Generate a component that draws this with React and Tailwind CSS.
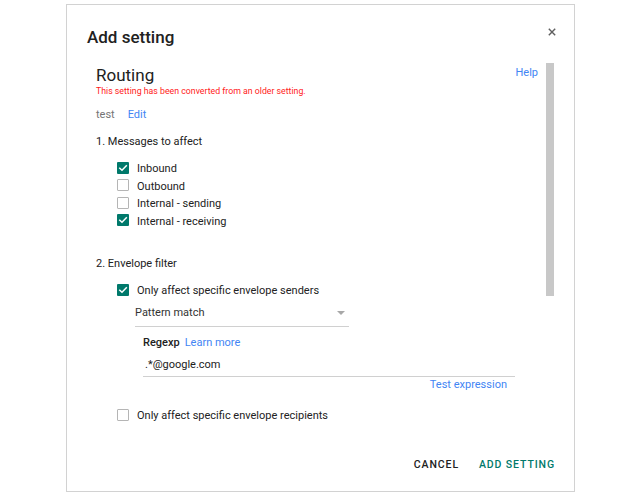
import React from "react";

function CheckBox({ checked }) {
  if (checked) {
    return (
      <span className="flex h-[12px] w-[12px] shrink-0 items-center justify-center rounded-[1px] bg-[#00796b]">
        <svg width="10" height="10" viewBox="0 0 10 10" fill="none">
          <path d="M1.8 5.2 L4 7.3 L8.3 2.8" stroke="#fff" strokeWidth="1.5" strokeLinecap="square" />
        </svg>
      </span>
    );
  }
  return <span className="h-[12px] w-[12px] shrink-0 rounded-[1px] border-[1.5px] border-[#b5b5b5] bg-white" />;
}

function CheckRow({ checked, label, className = "" }) {
  return (
    <div className={"flex items-center leading-[17.5px] " + className}>
      <span className="mb-[2px] ml-[21px] mr-[8px] flex">
        <CheckBox checked={checked} />
      </span>
      <span>{label}</span>
    </div>
  );
}

export default function App() {
  const messages = [
    { label: "Inbound", checked: true },
    { label: "Outbound", checked: false },
    { label: "Internal - sending", checked: false },
    { label: "Internal - receiving", checked: true },
  ];

  return (
    <div className="h-[499px] w-[640px] bg-white pt-[4px] font-['Roboto',sans-serif] text-[#222]">
      <div className="ml-[66px] flex h-[488px] w-[509px] flex-col border border-[#d2d2d2] bg-white">
        {/* header */}
        <div className="flex items-start justify-between pl-[20px] pr-[18px] pt-[22px]">
          <h1 className="text-[17px] font-medium leading-[20px] text-[#212121]">Add setting</h1>
          <svg width="8" height="8" viewBox="0 0 8 8" className="mt-[1px]">
            <path d="M0.8 0.8 L7.2 7.2 M7.2 0.8 L0.8 7.2" stroke="#5f5f5f" strokeWidth="1.4" />
          </svg>
        </div>

        {/* scrolling body */}
        <div className="mt-[16px] flex min-h-0 flex-1 overflow-hidden pl-[29px] pr-[20px]">
          <div className="min-w-0 flex-1 pr-[8px] pt-[2px] text-[11px]">
            <div className="flex items-start justify-between">
              <div className="text-[17px] leading-[20px] text-[#212121]">Routing</div>
              <a className="text-[11px] leading-[16px] text-[#4285f4]">Help</a>
            </div>
            <div className="text-[8.75px] leading-[12px] text-[#ff1a1a]">
              This setting has been converted from an older setting.
            </div>
            <div className="mt-[10px] flex leading-[16px]">
              <span className="text-[#757575]">test</span>
              <a className="ml-[13px] text-[#4285f4]">Edit</a>
            </div>

            <div className="mt-[11px] leading-[16px]">1. Messages to affect</div>
            <div className="mt-[10px]">
              {messages.map((m) => (
                <CheckRow key={m.label} checked={m.checked} label={m.label} />
              ))}
            </div>

            <div className="mt-[26px] leading-[16px]">2. Envelope filter</div>
            <CheckRow checked label="Only affect specific envelope senders" className="mt-[11px] !leading-[16px]" />

            {/* match type select */}
            <div className="ml-[39px] mt-[6px] flex w-[214px] items-center justify-between border-b border-[#d0d0d0] pb-[5px] leading-[16px]">
              <span className="text-[#333]">Pattern match</span>
              <span className="mr-[4px] h-0 w-0 border-x-[4px] border-t-[4px] border-x-transparent border-t-[#a8a8a8]" />
            </div>

            <div className="ml-[47px] mt-[8px] flex leading-[16px]">
              <span className="font-medium text-[#212121]">Regexp</span>
              <a className="ml-[5px] text-[#4285f4]">Learn more</a>
            </div>
            <div className="ml-[47px] mt-[6px] w-[372px]">
              <div className="border-b border-[#d0d0d0] pb-[3px] pl-[2px] leading-[16px] text-[#212121]">.*@google.com</div>
              <div className="pr-[8px] text-right leading-[16px] text-[#4285f4]">Test expression</div>
            </div>

            <CheckRow label="Only affect specific envelope recipients" className="mt-[15px] !leading-[16px]" />
          </div>
          <div className="h-[233px] w-[8px] shrink-0 bg-[#c8c8c8]" />
        </div>

        {/* actions */}
        <div className="flex justify-end gap-[20px] pb-[18px] pr-[19px] text-[10.5px] font-medium leading-[16px] tracking-[0.9px]">
          <button className="uppercase text-[#212121]">CANCEL</button>
          <button className="uppercase text-[#00796b]">ADD SETTING</button>
        </div>
      </div>
    </div>
  );
}
